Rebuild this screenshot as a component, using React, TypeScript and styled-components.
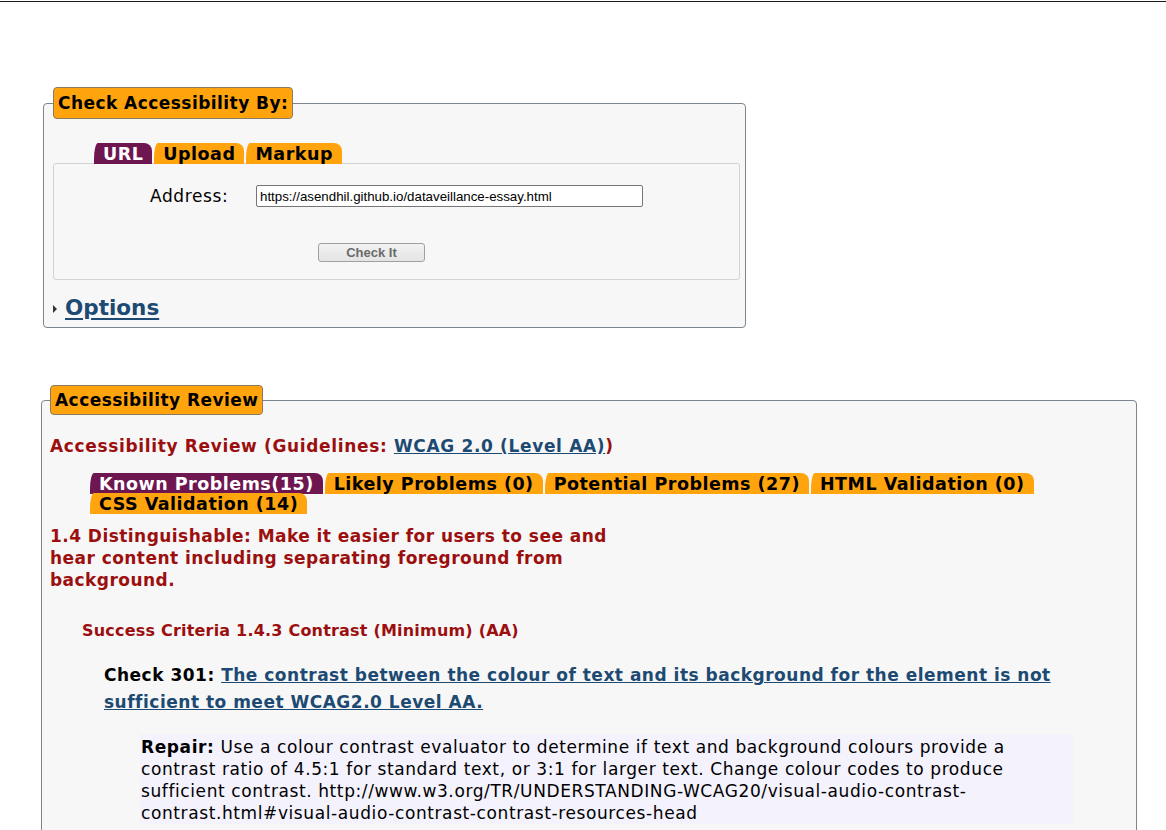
import React from "react";
import styled, { createGlobalStyle } from "styled-components";

const SANS = '"DejaVu Sans", Verdana, sans-serif';

const GlobalStyle = createGlobalStyle`
  html, body { margin: 0; padding: 0; background: #ffffff; }
  body { font-family: ${SANS}; color: #000; }
`;

const TopRule = styled.div`
  height: 1px;
  margin-top: 1px;
  background: #1a1a1a;
`;

const Page = styled.main`
  padding: 0;
`;

const FieldSet = styled.fieldset<{ $left: number; $width: number; $top: number; $pad: string }>`
  margin: ${(p) => p.$top}px 0 0 ${(p) => p.$left}px;
  width: ${(p) => p.$width}px;
  padding: ${(p) => p.$pad};
  box-sizing: border-box;
  border: 1px solid #7d8690;
  border-radius: 4px;
  background: #f7f7f7;
  min-width: 0;
`;

const Legend = styled.legend<{ $h: number }>`
  background: #ffa40d;
  border: 1px solid #8c7a5e;
  border-radius: 4px;
  padding: 0 4px;
  height: ${(p) => p.$h}px;
  box-sizing: border-box;
  line-height: ${(p) => p.$h - 2}px;
  font-family: ${SANS};
  font-weight: bold;
  font-size: 17px;
  letter-spacing: 0.45px;
  color: #000;
  white-space: nowrap;
`;

const TabRow = styled.div<{ $indent: number; $top: number }>`
  display: flex;
  flex-wrap: wrap;
  column-gap: 2px;
  margin: ${(p) => p.$top}px 0 0 ${(p) => p.$indent}px;
`;

const Tab = styled.span<{ $active?: boolean }>`
  display: inline-block;
  height: 21px;
  line-height: 22px;
  padding: 0 9px;
  margin-bottom: -1px;
  border-top-left-radius: 4px 16px;
  border-top-right-radius: 8px;
  background: ${(p) => (p.$active ? "#6e1650" : "#ffa40d")};
  color: ${(p) => (p.$active ? "#ffffff" : "#000000")};
  font-family: ${SANS};
  font-weight: bold;
  font-size: 17.5px;
  letter-spacing: 0.5px;
  white-space: nowrap;
  position: relative;
  z-index: 1;
`;

const Panel = styled.div`
  border: 1px solid #d3d3d3;
  border-radius: 3px;
  background: #f7f7f7;
  height: 117px;
  box-sizing: border-box;
  padding-top: 21px;
`;

const AddressRow = styled.div`
  display: flex;
  align-items: center;
  padding-left: 96px;
`;

const Label = styled.label`
  width: 106px;
  font-family: ${SANS};
  font-size: 17px;
  letter-spacing: 0.6px;
  color: #000;
`;

const UrlInput = styled.input`
  width: 387px;
  height: 22px;
  box-sizing: border-box;
  border: 1px solid #767676;
  border-radius: 2px;
  padding: 1px 3px;
  font-family: "Liberation Sans", Arial, sans-serif;
  font-size: 13.3px;
  color: #000;
  background: #fff;
`;

const ButtonRow = styled.div`
  padding: 35px 0 0 264px;
`;

const CheckButton = styled.button`
  width: 107px;
  height: 19px;
  padding: 0;
  border: 1px solid #a0a0a0;
  border-radius: 3px;
  background: linear-gradient(#f2f2f2, #e4e4e4);
  color: #6a6a6a;
  font-family: "Liberation Sans", Arial, sans-serif;
  font-size: 13px;
  font-weight: bold;
  line-height: 17px;
`;

const OptionsRow = styled.div`
  display: flex;
  align-items: center;
  gap: 8px;
  margin-top: 12px;
  height: 30px;
`;

const Caret = styled.span`
  width: 0;
  height: 0;
  border-top: 4px solid transparent;
  border-bottom: 4px solid transparent;
  border-left: 4px solid #333;
  margin-top: 3px;
`;

const OptionsLink = styled.a`
  font-family: ${SANS};
  font-weight: bold;
  font-size: 21.5px;
  color: #1d4a72;
  text-decoration: underline;
  text-decoration-thickness: 2px;
  text-underline-offset: 3px;
`;

const ReviewTitle = styled.h2`
  margin: 20px 0 0 0;
  font-family: ${SANS};
  font-weight: bold;
  font-size: 17px;
  letter-spacing: 0.65px;
  line-height: 22px;
  color: #9c0f0f;
`;

const Link = styled.a`
  color: #1d4a72;
  text-decoration: underline;
`;

const GuidelineHeading = styled.h3`
  margin: 12px 0 0 0;
  width: 580px;
  font-family: ${SANS};
  font-weight: bold;
  font-size: 17px;
  letter-spacing: 0.45px;
  line-height: 22px;
  color: #9c0f0f;
`;

const Criteria = styled.h4`
  margin: 29px 0 0 32px;
  font-family: ${SANS};
  font-weight: bold;
  font-size: 16px;
  letter-spacing: 0.2px;
  line-height: 22px;
  color: #9c0f0f;
`;

const CheckLine = styled.p`
  margin: 20px 0 0 54px;
  padding-right: 30px;
  font-family: ${SANS};
  font-weight: bold;
  font-size: 17px;
  letter-spacing: 0.5px;
  line-height: 27px;
  color: #000;
`;

const CheckLink = styled.a`
  color: #1d4a72;
  text-decoration: underline;
`;

const RepairBox = styled.div`
  margin: 18px 0 0 90px;
  width: 933px;
  box-sizing: border-box;
  padding: 2px 40px 0 1px;
  height: 90px;
  background: #f4f2fd;
  font-family: ${SANS};
  font-size: 17px;
  letter-spacing: 0.6px;
  line-height: 22px;
  color: #000;
`;

export default function App() {
  return (
    <>
      <GlobalStyle />
      <TopRule />
      <Page>
        <FieldSet $left={43} $width={703} $top={85} $pad="0 5px 5px 9px">
          <Legend $h={32}>Check Accessibility By:</Legend>
          <TabRow $indent={41} $top={24}>
            <Tab $active>URL</Tab>
            <Tab>Upload</Tab>
            <Tab>Markup</Tab>
          </TabRow>
          <Panel>
            <AddressRow>
              <Label htmlFor="uri">Address:</Label>
              <UrlInput id="uri" defaultValue="https://asendhil.github.io/dataveillance-essay.html" />
            </AddressRow>
            <ButtonRow>
              <CheckButton disabled>Check It</CheckButton>
            </ButtonRow>
          </Panel>
          <OptionsRow>
            <Caret />
            <OptionsLink href="#">Options</OptionsLink>
          </OptionsRow>
        </FieldSet>

        <FieldSet $left={41} $width={1096} $top={57} $pad="0 8px 60px 8px">
          <Legend $h={30}>Accessibility Review</Legend>
          <ReviewTitle>
            Accessibility Review (Guidelines: <Link href="#">WCAG 2.0 (Level AA)</Link>)
          </ReviewTitle>
          <TabRow $indent={40} $top={16}>
            <Tab $active>Known Problems(15)</Tab>
            <Tab>Likely Problems (0)</Tab>
            <Tab>Potential Problems (27)</Tab>
            <Tab>HTML Validation (0)</Tab>
            <Tab>CSS Validation (14)</Tab>
          </TabRow>
          <GuidelineHeading>
            1.4 Distinguishable: Make it easier for users to see and hear content including separating foreground
            from background.
          </GuidelineHeading>
          <Criteria>Success Criteria 1.4.3 Contrast (Minimum) (AA)</Criteria>
          <CheckLine>
            Check 301:{" "}
            <CheckLink href="#">
              The contrast between the colour of text and its background for the element is not sufficient to meet
              WCAG2.0 Level AA.
            </CheckLink>
          </CheckLine>
          <RepairBox>
            <strong>Repair:</strong> Use a colour contrast evaluator to determine if text and background colours
            provide a contrast ratio of 4.5:1 for standard text, or 3:1 for larger text. Change colour codes to
            produce sufficient contrast. http://www.w3.org/TR/UNDERSTANDING-WCAG20/visual-audio-contrast-contrast.html#visual-audio-contrast-contrast-resources-head
          </RepairBox>
        </FieldSet>
      </Page>
    </>
  );
}
